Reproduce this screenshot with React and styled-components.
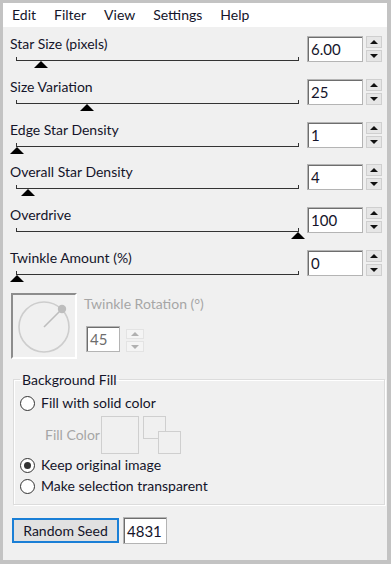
import styled, { createGlobalStyle } from "styled-components";

const GlobalStyle = createGlobalStyle`
    html, body {
        margin: 0;
        padding: 0;
        background: #f0f0f0;
    }
    * {
        box-sizing: border-box;
    }
`;

const sliders = [
    { label: "Star Size (pixels)", value: "6.00", pos: 0.085 },
    { label: "Size Variation", value: "25", pos: 0.25 },
    { label: "Edge Star Density", value: "1", pos: 0 },
    { label: "Overall Star Density", value: "4", pos: 0.04 },
    { label: "Overdrive", value: "100", pos: 1 },
    { label: "Twinkle Amount (%)", value: "0", pos: 0 },
];

// Botoes de subir/descer do campo numerico
const Spinner = ({ disabled, small }) => (
    <SpinBox $small={small}>
        <SpinHalf $disabled={disabled}>
            <Arrow $up $disabled={disabled} />
        </SpinHalf>
        <SpinHalf $disabled={disabled}>
            <Arrow $disabled={disabled} />
        </SpinHalf>
    </SpinBox>
);

const SliderRow = ({ label, value, pos }) => (
    <Row>
        <LeftCol>
            <Label>{label}</Label>
            <Track>
                <Thumb style={{ left: `${pos * 100}%` }} />
            </Track>
        </LeftCol>
        <NumBox>{value}</NumBox>
        <Spinner />
    </Row>
);

const Radio = ({ checked, children }) => (
    <RadioRow>
        <RadioCircle $checked={checked} />
        <span>{children}</span>
    </RadioRow>
);

const App = () => {
    return (
        <>
            <GlobalStyle />
            <Frame>
                <MenuBar>
                    <MenuItem>Edit</MenuItem>
                    <MenuItem>Filter</MenuItem>
                    <MenuItem>View</MenuItem>
                    <MenuItem>Settings</MenuItem>
                    <MenuItem>Help</MenuItem>
                </MenuBar>
                <Content>
                    {sliders.map((s) => (
                        <SliderRow key={s.label} {...s} />
                    ))}

                    <RotationRow>
                        <Dial>
                            <svg width="62" height="62" viewBox="0 0 62 62">
                                <circle cx="31" cy="32" r="25" fill="none" stroke="#cdcdcd" strokeWidth="1.6" />
                                <line x1="31" y1="32" x2="48" y2="15" stroke="#bdbdbd" strokeWidth="1.6" />
                                <circle cx="49" cy="14" r="4.2" fill="#bdbdbd" />
                            </svg>
                        </Dial>
                        <RotationInfo>
                            <DisabledText>Twinkle Rotation (°)</DisabledText>
                            <RotationInputs>
                                <NumBox $small $disabled>45</NumBox>
                                <Spinner disabled small />
                            </RotationInputs>
                        </RotationInfo>
                    </RotationRow>

                    <Group>
                        <Legend>Background Fill</Legend>
                        <Radio>Fill with solid color</Radio>
                        <FillRow>
                            <DisabledText>Fill Color</DisabledText>
                            <ColorSwatch />
                            <SwatchPair>
                                <SmallSwatch />
                                <SmallSwatch $back />
                            </SwatchPair>
                        </FillRow>
                        <Radio checked>Keep original image</Radio>
                        <Radio>Make selection transparent</Radio>
                    </Group>

                    <SeedRow>
                        <SeedButton>Random Seed</SeedButton>
                        <SeedBox>4831</SeedBox>
                    </SeedRow>
                </Content>
            </Frame>
        </>
    );
};

const Frame = styled.div`
    width: 391px;
    height: 564px;
    border-style: solid;
    border-color: #c3c3c3;
    border-width: 3px 4px 4px 3px;
    background: #f0f0f0;
    display: flex;
    flex-direction: column;
    font-family: Lato, "Liberation Sans", sans-serif;
    font-size: 14px;
    color: #14142a;
    overflow: hidden;
`;

const MenuBar = styled.div`
    height: 24px;
    background: #fff;
    display: flex;
    align-items: center;
    padding-left: 1px;
`;

const MenuItem = styled.div`
    padding: 0 8px;
    font-size: 14px;
    line-height: 24px;
    margin-right: 2px;
`;

const Content = styled.div`
    display: flex;
    flex-direction: column;
    padding: 9px 5px 0 7px;
`;

const Row = styled.div`
    height: 42.8px;
    display: flex;
    align-items: flex-start;
`;

const LeftCol = styled.div`
    flex: 1;
    display: flex;
    flex-direction: column;
`;

const Label = styled.div`
    line-height: 16px;
    height: 16px;
    white-space: nowrap;
`;

const Track = styled.div`
    position: relative;
    margin: 5px 8px 0 6px;
    height: 4px;
    border-left: 1px solid #333;
    border-right: 1px solid #333;
    border-bottom: 1px solid #333;
`;

const Thumb = styled.div`
    position: absolute;
    top: 4px;
    width: 0;
    height: 0;
    margin-left: -7px;
    border-left: 7px solid transparent;
    border-right: 7px solid transparent;
    border-bottom: 7px solid #000;
`;

const NumBox = styled.div`
    width: ${(p) => (p.$small ? "34px" : "56px")};
    height: 26px;
    background: #fff;
    border: 1px solid #b4b4b4;
    box-shadow: inset 1px 1px 0 #6e6e6e;
    padding: 3px 0 0 3px;
    font-size: 15px;
    line-height: 18px;
    color: ${(p) => (p.$disabled ? "#6d6d6d" : "#14142a")};
`;

const SpinBox = styled.div`
    width: ${(p) => (p.$small ? "18px" : "16px")};
    height: ${(p) => (p.$small ? "23px" : "26px")};
    margin-left: ${(p) => (p.$small ? "6px" : "3px")};
    margin-top: ${(p) => (p.$small ? "3px" : "0")};
    display: flex;
    flex-direction: column;
    gap: 2px;
`;

const SpinHalf = styled.div`
    flex: 1;
    background: ${(p) => (p.$disabled ? "#f4f4f4" : "#e6e6e6")};
    border: 1px solid ${(p) => (p.$disabled ? "#e3e3e3" : "#cfcfcf")};
    display: flex;
    align-items: center;
    justify-content: center;
`;

const Arrow = styled.div`
    width: 0;
    height: 0;
    border-left: 4px solid transparent;
    border-right: 4px solid transparent;
    ${(p) => (p.$up ? "border-bottom" : "border-top")}: 4px solid ${(p) => (p.$disabled ? "#b0b0b0" : "#111")};
`;

const RotationRow = styled.div`
    display: flex;
    align-items: flex-start;
    margin-left: 1px;
    gap: 7px;
`;

const Dial = styled.div`
    width: 66px;
    height: 66px;
    border-style: solid;
    border-width: 2px;
    border-color: #8c8c8c #fff #fff #8c8c8c;
    display: flex;
    align-items: center;
    justify-content: center;
`;

const RotationInfo = styled.div`
    display: flex;
    flex-direction: column;
    padding-top: 3px;
`;

const RotationInputs = styled.div`
    display: flex;
    margin-top: 14px;
    margin-left: 2px;
`;

const DisabledText = styled.span`
    color: #a6a6a6;
    line-height: 16px;
`;

const Group = styled.fieldset`
    margin: 13px 0 0 3px;
    width: 372px;
    height: 133px;
    padding: 5px 8px 0 6px;
    border: 1px solid #dcdcdc;
    box-shadow: inset 1px 1px 0 #fff, 1px 1px 0 #fff;
    display: flex;
    flex-direction: column;
`;

const Legend = styled.legend`
    padding: 0 2px;
    margin-left: 0;
    line-height: 16px;
`;

const RadioRow = styled.div`
    display: flex;
    align-items: center;
    gap: 6px;
    height: 21px;
    line-height: 16px;
`;

const RadioCircle = styled.div`
    width: 15px;
    height: 15px;
    border-radius: 50%;
    border: 1px solid #333;
    background: #fff;
    display: flex;
    align-items: center;
    justify-content: center;
    &::after {
        content: "";
        display: ${(p) => (p.$checked ? "block" : "none")};
        width: 7px;
        height: 7px;
        border-radius: 50%;
        background: #333;
    }
`;

const FillRow = styled.div`
    display: flex;
    align-items: center;
    height: 40px;
    margin: 1px 0 0 25px;

    & > span {
        width: 56px;
    }
`;

const ColorSwatch = styled.div`
    width: 38px;
    height: 38px;
    border: 1px solid #cfcfcf;
`;

const SwatchPair = styled.div`
    position: relative;
    width: 40px;
    height: 38px;
    margin-left: 4px;
`;

const SmallSwatch = styled.div`
    position: absolute;
    width: 23px;
    height: 23px;
    border: 1px solid #cfcfcf;
    background: #f0f0f0;
    left: ${(p) => (p.$back ? "15px" : "0")};
    top: ${(p) => (p.$back ? "15px" : "0")};
`;

const SeedRow = styled.div`
    display: flex;
    align-items: center;
    gap: 4px;
    margin: 12px 0 0 2px;
`;

const SeedButton = styled.button`
    width: 107px;
    height: 25px;
    background: #e1e1e1;
    border: 2px solid #1a7fd6;
    font-family: inherit;
    font-size: 14px;
    color: #14142a;
    padding: 0;
`;

const SeedBox = styled.div`
    width: 44px;
    height: 27px;
    background: #fff;
    border: 1px solid #b4b4b4;
    box-shadow: inset 1px 1px 0 #6e6e6e;
    padding: 4px 0 0 3px;
    font-size: 15px;
    line-height: 18px;
`;

export default App;
